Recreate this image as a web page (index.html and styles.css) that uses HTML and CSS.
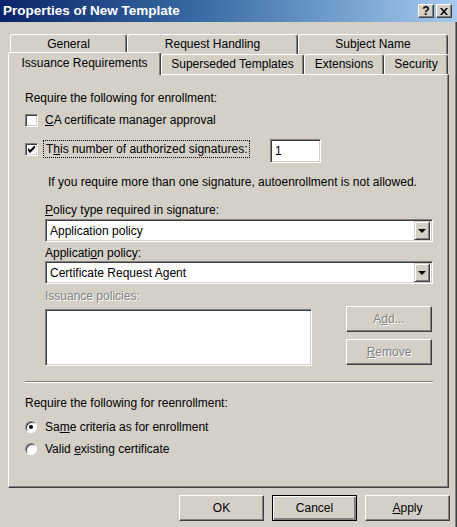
FILE: index.html
```html
<!DOCTYPE html>
<html lang="en">
<head>
    <meta charset="UTF-8">
    <title>Properties of New Template</title>
    <link rel="stylesheet" href="styles.css">
</head>
<body>
    <div class="window">
        <div class="titlebar">
            <span class="title">Properties of New Template</span>
            <div class="title-buttons">
                <span class="tbtn">?</span>
                <span class="tbtn close">
                    <svg width="8" height="7" viewBox="0 0 8 7"><path d="M0 0h2l2 2.5L6 0h2L5 3.5 8 7H6L4 4.5 2 7H0l3-3.5z" fill="#000"/></svg>
                </span>
            </div>
        </div>

        <div class="tabs">
            <div class="tab-row">
                <div class="tab tab-general">General</div>
                <div class="tab tab-request">Request Handling</div>
                <div class="tab tab-subject">Subject Name</div>
            </div>
            <div class="tab-row front">
                <div class="tab tab-issuance active">Issuance Requirements</div>
                <div class="tab tab-superseded">Superseded Templates</div>
                <div class="tab tab-extensions">Extensions</div>
                <div class="tab tab-security">Security</div>
            </div>
        </div>

        <div class="panel">
            <div class="heading">Require the following for enrollment:</div>

            <div class="check-row first">
                <span class="checkbox"></span>
                <span class="check-label"><u>C</u>A certificate manager approval</span>
            </div>

            <div class="check-row signatures">
                <div class="check-part">
                    <span class="checkbox">
                        <svg width="7" height="7" viewBox="0 0 7 7"><path d="M0 2L2 4L7 -1V2L2 7L0 5Z" fill="#000"/></svg>
                    </span>
                    <span class="check-label focus">T<u>h</u>is number of authorized signatures:</span>
                </div>
                <div class="textbox">1</div>
            </div>

            <div class="note">If you require more than one signature, autoenrollment is not allowed.</div>

            <div class="field">
                <div class="field-label"><u>P</u>olicy type required in signature:</div>
                <div class="select">
                    <span>Application policy</span>
                    <span class="drop"><i></i></span>
                </div>
                <div class="field-label second">Applicati<u>o</u>n policy:</div>
                <div class="select tight">
                    <span>Certificate Request Agent</span>
                    <span class="drop"><i></i></span>
                </div>
                <div class="field-label disabled third">Issuance policies:</div>
                <div class="list-row">
                    <div class="listbox"></div>
                    <div class="list-buttons">
                        <div class="button disabled">A<u>d</u>d...</div>
                        <div class="button disabled"><u>R</u>emove</div>
                    </div>
                </div>
            </div>

            <div class="separator"></div>

            <div class="heading re">Require the following for reenrollment:</div>
            <div class="radio-row first">
                <span class="radio checked"></span>
                <span>Sa<u>m</u>e criteria as for enrollment</span>
            </div>
            <div class="radio-row">
                <span class="radio"></span>
                <span>Valid <u>e</u>xisting certificate</span>
            </div>
        </div>

        <div class="actions">
            <div class="button">OK</div>
            <div class="button default">Cancel</div>
            <div class="button"><u>A</u>pply</div>
        </div>
    </div>
</body>
</html>
```

FILE: styles.css
```css
body {
    margin: 0;
    background: #d4d0c8;
    font-family: "Liberation Sans", Arial, sans-serif;
    font-size: 12px;
    line-height: 14px;
    color: #000;
}

u {
    text-decoration: underline;
    text-underline-offset: 1px;
}

.window {
    width: 457px;
    height: 527px;
    box-sizing: border-box;
    background: #d4d0c8;
    box-shadow: inset -1px 0 #404040, inset -2px 0 #808080;
    overflow: hidden;
}

/* title bar */
.titlebar {
    height: 22px;
    display: flex;
    align-items: center;
    justify-content: space-between;
    padding: 0 5px 0 3px;
    background: linear-gradient(to right, #0a246a, #3a6ea5 45%, #a6caf0);
}

.title {
    color: #fff;
    font-weight: bold;
    font-size: 13.5px;
}

.title-buttons {
    display: flex;
    gap: 2px;
}

.tbtn {
    width: 16px;
    height: 14px;
    box-sizing: border-box;
    display: flex;
    align-items: center;
    justify-content: center;
    background: #d4d0c8;
    font-weight: bold;
    font-size: 12px;
    border: 1px solid;
    border-color: #fff #404040 #404040 #fff;
    box-shadow: inset -1px -1px #808080;
}

/* tabs */
.tabs {
    margin-top: 12px;
}

.tab-row {
    display: flex;
    padding-left: 10px;
    height: 20px;
}

.tab-row.front {
    padding-left: 8px;
}

.tab {
    box-sizing: border-box;
    height: 20px;
    display: flex;
    align-items: center;
    justify-content: center;
    border-top: 1px solid #fff;
    border-left: 1px solid #fff;
    border-right: 1px solid #404040;
    border-radius: 3px 3px 0 0;
    box-shadow: inset -1px 0 #808080;
    padding-bottom: 1px;
}

.tab-general { width: 117px; }
.tab-request { width: 171px; }
.tab-subject { width: 150px; }
.tab-issuance { width: 153px; }
.tab-superseded { width: 143px; }
.tab-extensions { width: 80px; }
.tab-security { width: 64px; }

.tab.active {
    position: relative;
    z-index: 1;
    height: 23px;
    margin-top: -2px;
    background: #d4d0c8;
    padding-bottom: 3px;
}

/* panel */
.panel {
    box-sizing: border-box;
    width: 441px;
    height: 414px;
    margin-left: 8px;
    padding: 16px 15px 0 16px;
    border: 1px solid;
    border-color: #fff #404040 #404040 #fff;
    box-shadow: inset -1px -1px #808080;
}

.check-row {
    display: flex;
    align-items: center;
}

.check-row.first {
    margin-top: 8px;
}

.checkbox {
    width: 13px;
    height: 13px;
    box-sizing: border-box;
    background: #fff;
    border: 1px solid;
    border-color: #808080 #fff #fff #808080;
    box-shadow: inset 1px 1px #404040, inset -1px -1px #d4d0c8;
    display: flex;
    align-items: center;
    justify-content: center;
    flex: none;
}

.check-label {
    margin-left: 7px;
}

.check-label.focus {
    margin-left: 5px;
    padding: 1px 2px;
    border: 1px dotted #000;
}

.check-row.signatures {
    margin-top: 12px;
    align-items: flex-start;
}

.check-part {
    display: flex;
    align-items: center;
    width: 245px;
    margin-top: 1px;
}

.textbox,
.select,
.listbox {
    box-sizing: border-box;
    background: #fff;
    border: 1px solid;
    border-color: #808080 #fff #fff #808080;
    box-shadow: inset 1px 1px #404040, inset -1px -1px #d4d0c8;
}

.textbox {
    width: 51px;
    height: 24px;
    padding: 4px 0 0 4px;
}

.note {
    margin: 12px 0 0 23px;
}

.field {
    margin-left: 20px;
}

.field-label {
    margin-top: 14px;
}

.field-label.second {
    margin-top: 4px;
}

.field-label.third {
    margin-top: 5px;
}

.disabled {
    color: #808080;
    text-shadow: 1px 1px 0 #fff;
}

.select {
    width: 388px;
    height: 23px;
    margin-top: 2px;
    display: flex;
    align-items: center;
    justify-content: space-between;
    padding: 0 2px 0 4px;
}

.select.tight {
    margin-top: 1px;
}

.drop {
    width: 16px;
    height: 19px;
    box-sizing: border-box;
    background: #d4d0c8;
    border: 1px solid;
    border-color: #d4d0c8 #404040 #404040 #d4d0c8;
    box-shadow: inset 1px 1px #fff, inset -1px -1px #808080;
    display: flex;
    align-items: center;
    justify-content: center;
}

.drop i {
    width: 0;
    height: 0;
    border-left: 4px solid transparent;
    border-right: 4px solid transparent;
    border-top: 4px solid #000;
}

.list-row {
    display: flex;
    justify-content: space-between;
    margin-top: 3px;
}

.listbox {
    width: 267px;
    height: 57px;
    margin-top: 3px;
}

.list-buttons {
    display: flex;
    flex-direction: column;
    gap: 7px;
    width: 86px;
    margin-right: 1px;
}

.list-buttons .button {
    width: 86px;
    height: 26px;
}

.button {
    box-sizing: border-box;
    width: 85px;
    height: 26px;
    display: flex;
    align-items: center;
    justify-content: center;
    background: #d4d0c8;
    border: 1px solid;
    border-color: #fff #404040 #404040 #fff;
    box-shadow: inset -1px -1px #808080;
}

.button.default {
    border: 1px solid #000;
    box-shadow: inset 1px 1px #fff, inset -2px -2px #808080, inset -1px -1px #404040;
}

.separator {
    margin-top: 15px;
    width: 408px;
    border-top: 1px solid #808080;
    border-bottom: 1px solid #fff;
}

.heading.re {
    margin-top: 13px;
}

.radio-row {
    display: flex;
    align-items: center;
    gap: 8px;
    margin-top: 8px;
}

.radio-row.first {
    margin-top: 10px;
}

.radio {
    width: 12px;
    height: 12px;
    box-sizing: border-box;
    border-radius: 50%;
    background: #fff;
    border: 1px solid;
    border-color: #808080 #fff #fff #808080;
    box-shadow: inset 1px 1px #404040;
    display: flex;
    align-items: center;
    justify-content: center;
    flex: none;
}

.radio.checked::after {
    content: "";
    width: 4px;
    height: 4px;
    border-radius: 50%;
    background: #000;
}

/* bottom buttons */
.actions {
    display: flex;
    justify-content: flex-end;
    gap: 8px;
    margin-top: 7px;
    padding-right: 7px;
}
```
